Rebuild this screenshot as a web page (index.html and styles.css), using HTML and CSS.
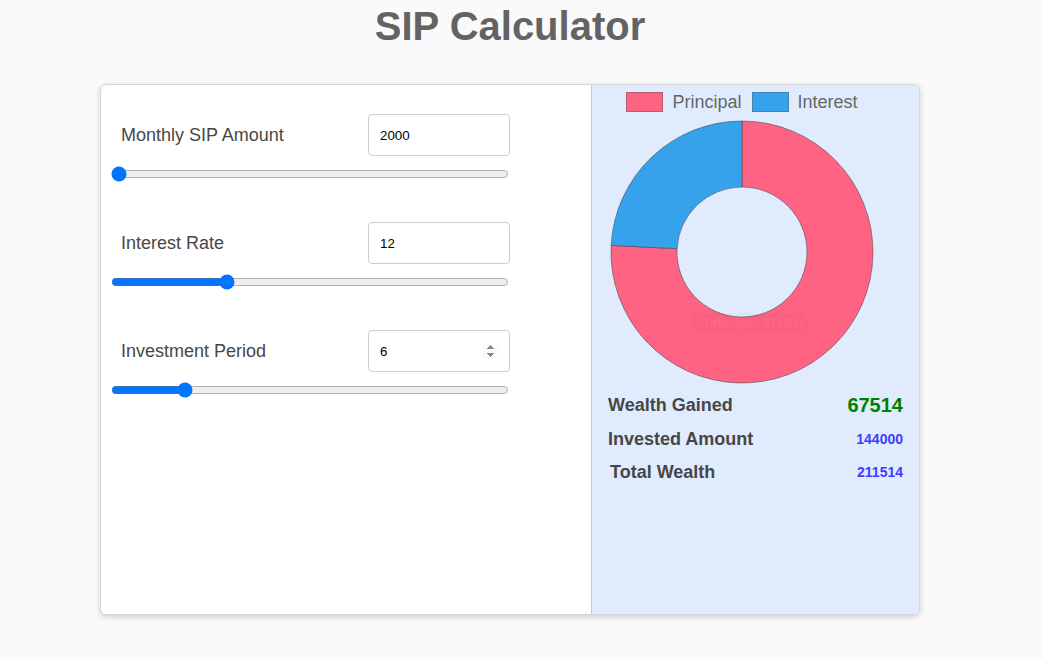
FILE: index.html
```html
<!DOCTYPE html>
<html lang="en">
<head>
<meta charset="utf-8">
<title>SIP Calculator</title>
<link rel="stylesheet" href="styles.css">
</head>
<body>
<div class="page">
  <h1 class="title">SIP Calculator</h1>
  <div class="card">
    <div class="inputs">
      <div class="field">
        <div class="field-row">
          <label class="label" for="amt">Monthly SIP Amount</label>
          <input class="num" id="amt" type="number" value="2000">
        </div>
        <input class="range" type="range" min="2000" max="100000" value="2000">
      </div>
      <div class="field">
        <div class="field-row">
          <label class="label" for="rate">Interest Rate</label>
          <input class="num" id="rate" type="number" value="12">
        </div>
        <input class="range" type="range" min="1" max="40" value="12">
      </div>
      <div class="field">
        <div class="field-row">
          <label class="label" for="period">Investment Period</label>
          <input class="num" id="period" type="number" value="6" autofocus>
        </div>
        <input class="range" type="range" min="1" max="30" value="6">
      </div>
    </div>
    <div class="results">
      <div class="chart">
        <div class="legend">
          <div class="legend-item"><span class="swatch swatch-principal"></span><span>Principal</span></div>
          <div class="legend-item"><span class="swatch swatch-interest"></span><span>Interest</span></div>
        </div>
        <svg class="donut" width="300" height="264" viewBox="0 0 300 264">
          <path d="M150,1 A131,131 0 1 1 19.17,125.37 L85.08,128.71 A65,65 0 1 0 150,67 Z" fill="#ff6384" stroke="rgba(70,70,70,0.55)" stroke-width="1"/>
          <path d="M19.17,125.37 A131,131 0 0 1 150,1 L150,67 A65,65 0 0 0 85.08,128.71 Z" fill="#36a2eb" stroke="rgba(70,70,70,0.55)" stroke-width="1"/>
        </svg>
        <div class="tooltip"><span class="tip-swatch"></span>Principal: 211,514</div>
      </div>
      <div class="stats">
        <div class="stat"><span class="stat-label">Wealth Gained</span><span class="stat-gain">67514</span></div>
        <div class="stat"><span class="stat-label">Invested Amount</span><span class="stat-value">144000</span></div>
        <div class="stat stat-indent"><span class="stat-label">Total Wealth</span><span class="stat-value">211514</span></div>
      </div>
    </div>
  </div>
</div>
</body>
</html>
```

FILE: styles.css
```css
html, body {
  margin: 0;
  padding: 0;
  background: #fafafa;
  font-family: "Liberation Sans", Arial, sans-serif;
}

.page {
  width: 1020px;
  height: 659px;
  overflow: hidden;
}

.title {
  margin: 3px 0 0;
  height: 46px;
  line-height: 46px;
  font-size: 40px;
  font-weight: bold;
  color: #636363;
  text-align: center;
}

.card {
  width: 820px;
  height: 531px;
  margin: 35px auto 0;
  box-sizing: border-box;
  border: 1px solid #d6d6d6;
  border-radius: 6px;
  box-shadow: 0 2px 6px rgba(0, 0, 0, 0.18);
  background: #ffffff;
  display: flex;
  overflow: hidden;
}

.inputs {
  width: 491px;
  box-sizing: border-box;
  border-right: 1px solid #c9c9c9;
  padding: 29px 0 0 10px;
}

.field {
  margin-bottom: 40px;
}

.field-row {
  width: 399px;
  height: 42px;
  display: flex;
  align-items: center;
  justify-content: space-between;
}

.label {
  padding-left: 10px;
  font-size: 18px;
  color: #474747;
}

.num {
  width: 142px;
  height: 42px;
  box-sizing: border-box;
  border: 1px solid #cccccc;
  border-radius: 4px;
  padding: 0 11px;
  font-family: "Liberation Sans", Arial, sans-serif;
  font-size: 13.33px;
  color: #000;
  background: #fff;
  outline: none;
}

.range {
  display: block;
  width: 398px;
  height: 16px;
  margin: 10px 0 0;
  accent-color: #0075ff;
}

.results {
  flex: 1;
  background: #e0ecfe;
}

.chart {
  position: relative;
  width: 300px;
  height: 299px;
}

.legend {
  display: flex;
  justify-content: center;
  gap: 10px;
  padding-top: 7px;
  height: 20px;
  margin-bottom: 8px;
}

.legend-item {
  display: flex;
  align-items: center;
  gap: 9px;
  font-size: 18px;
  color: #666;
  line-height: 20px;
}

.swatch {
  width: 37px;
  height: 20px;
  box-sizing: border-box;
  border: 1px solid rgba(90, 90, 90, 0.45);
}

.swatch-principal {
  background: #ff6384;
}

.swatch-interest {
  background: #36a2eb;
}

.donut {
  display: block;
}

.tooltip {
  position: absolute;
  left: 101px;
  top: 228px;
  width: 112px;
  height: 20px;
  box-sizing: border-box;
  padding-left: 8px;
  border-radius: 4px;
  background: rgba(0, 0, 0, 0.8);
  color: #fff;
  font-size: 12px;
  font-weight: bold;
  line-height: 20px;
  white-space: nowrap;
  opacity: 0.025;
  display: flex;
  align-items: center;
  gap: 4px;
}

.tooltip::after {
  content: "";
  position: absolute;
  right: -5px;
  top: 5px;
  border-top: 5px solid transparent;
  border-bottom: 5px solid transparent;
  border-left: 5px solid rgba(0, 0, 0, 0.8);
}

.tip-swatch {
  width: 10px;
  height: 10px;
  background: #fff;
}

.stats {
  padding: 4px 16px 0;
}

.stat {
  height: 34px;
  display: flex;
  align-items: center;
  justify-content: space-between;
}

.stat-indent {
  height: 32px;
  padding-left: 2px;
}

.stat-label {
  font-size: 18px;
  font-weight: bold;
  color: #474747;
}

.stat-gain {
  font-size: 20px;
  font-weight: bold;
  color: #008000;
}

.stat-value {
  font-size: 14px;
  font-weight: bold;
  color: #3d3dff;
}
```
